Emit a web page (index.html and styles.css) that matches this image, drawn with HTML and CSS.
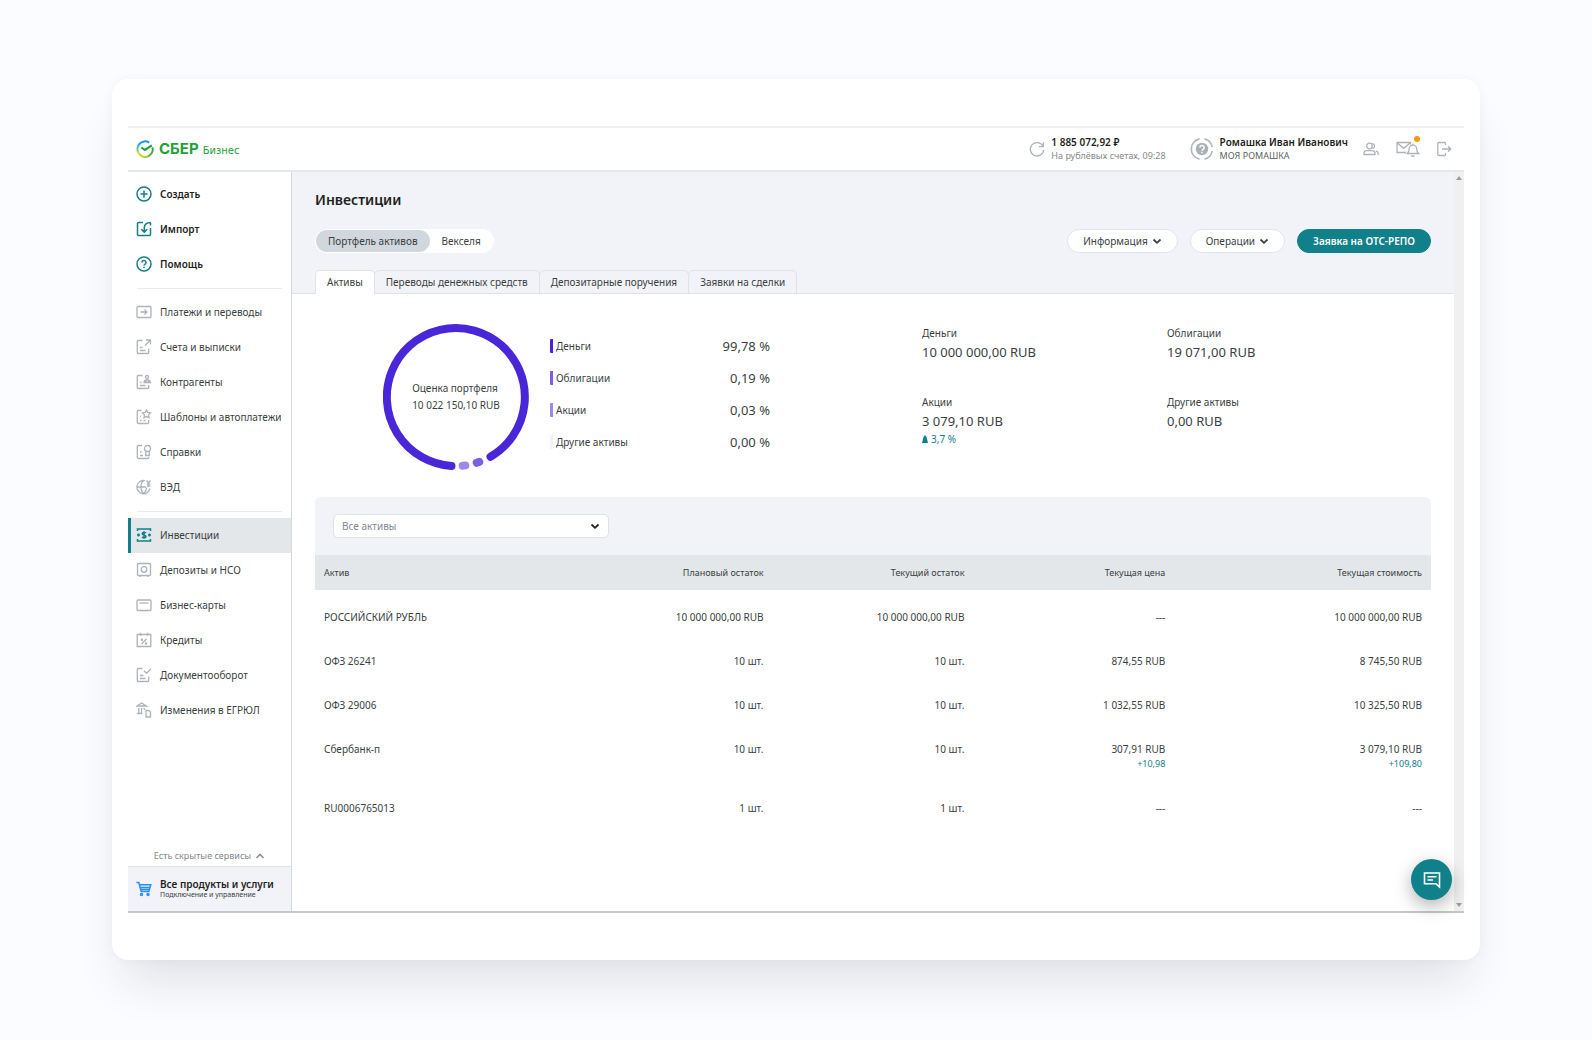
FILE: index.html
```html
<!DOCTYPE html>
<html lang="ru">
<head>
<meta charset="utf-8">
<meta name="viewport" content="width=device-width, initial-scale=1">
<title>СБЕР Бизнес — Инвестиции</title>
<link rel="stylesheet" href="styles.css">
</head>
<body>
<div class="card">
  <div class="app">
    <header class="header">
      <a class="logo" href="#">
        <svg class="logo-mark" viewBox="0 0 18 18" fill="none">
          <defs>
            <linearGradient id="left" x1="0" y1="0" x2="0" y2="1"><stop offset="0" stop-color="#1f9be0"/><stop offset=".45" stop-color="#4cc8a0"/><stop offset="1" stop-color="#f0e51a"/></linearGradient>
            <linearGradient id="right" x1="0" y1="1" x2="1" y2="0"><stop offset="0" stop-color="#e5e31c"/><stop offset=".5" stop-color="#52b43a"/><stop offset="1" stop-color="#21a038"/></linearGradient>
          </defs>
          <path d="M3.2 14.2A7.6 7.6 0 0 1 3.8 3.6" stroke="url(#left)" stroke-width="2"/>
          <path d="M3.4 3.9A7.6 7.6 0 0 1 13.2 2.6" stroke="#1f97e8" stroke-width="2"/>
          <path d="M3.2 14.2A7.6 7.6 0 0 0 16.4 7.4" stroke="url(#right)" stroke-width="2"/>
          <path d="M5.4 7.5l3.5 2.4 7-4.6" stroke="#21a038" stroke-width="2.1"/>
        </svg>
        <span class="logo-name">СБЕР</span>
        <span class="logo-sub">Бизнес</span>
      </a>
      <div class="balance">
        <svg class="icon grey" viewBox="0 0 16 16"><path d="M14 5.2A6.7 6.7 0 1 0 14.7 9M14.4 1.2v4.4H10"/></svg>
        <div class="two-line"><b>1 885 072,92 ₽</b><small class="muted">На рублёвых счетах, 09:28</small></div>
      </div>
      <div class="user">
        <svg class="avatar" viewBox="0 0 24 24"><g fill="none" stroke="#b3b9be" stroke-width="1.6"><path d="M14.5 1.9a10.3 10.3 0 0 1 7.7 8.3M22.2 13.8a10.3 10.3 0 0 1-7.7 8.3M9.5 22.1a10.3 10.3 0 0 1 0-20.2"/></g><circle cx="12" cy="12" r="6.2" fill="#a9b1b7"/><path d="M9.9 10.600a2.100 2.100 0 1 1 3.200 1.700c-.8.500-1.100.8-1.100 1.400M12 14.800v1.400" fill="none" stroke="#fff" stroke-width="1.500"/></svg>
        <div class="two-line"><b>Ромашка Иван Иванович</b><small>МОЯ РОМАШКА</small></div>
      </div>
      <button class="icon-button people" aria-label="Пользователи"><svg class="icon grey" viewBox="0 0 16 16"><circle cx="6.500" cy="5" r="2.800"/><path d="M1 13.500v-1.300c0-1.700 1.300-2.500 2.800-2.500h5.400c1.500 0 2.800.8 2.800 2.500v1.300zM9.500 2.300a2.800 2.800 0 0 1 0 5.400M13 9.800c1.500.5 2.200 1.300 2.200 2.700v1.500"/></svg></button>
      <button class="icon-button mail" aria-label="Уведомления"><svg class="icon wide grey" viewBox="0 0 24 16"><path d="M10 11.500H1v-10h13.500v2M1 1.800l6.700 5.500 6.600-5.500M11.200 12.500h11.300c-1.500-1.300-1.800-2.500-1.800-4.500a3.800 3.800 0 0 0-7.600 0c0 2-.4 3.200-1.900 4.500zM15.300 14.500c.9 1 2.300 1 3.200 0M16.900 4V2.800"/></svg><i class="dot"></i></button>
      <button class="icon-button" aria-label="Выйти"><svg class="icon grey" viewBox="0 0 16 16"><path d="M9.500 4V2.500a1 1 0 0 0-1-1H2.800a1 1 0 0 0-1 1v11a1 1 0 0 0 1 1h5.700a1 1 0 0 0 1-1V12M6 8h8.800M12 5.200L14.800 8 12 10.800"/></svg></button>
    </header>

    <div class="body">
      <aside class="sidebar">
        <nav class="nav">
          <a class="nav-item strong" href="#"><svg class="icon teal" viewBox="0 0 16 16"><circle cx="8" cy="8" r="7"/><path d="M8 4.500v7M4.500 8h7"/></svg>Создать</a>
          <a class="nav-item strong" href="#"><svg class="icon teal" viewBox="0 0 16 16"><path d="M7 1.500H2.500a1 1 0 0 0-1 1v11a1 1 0 0 0 1 1h11a1 1 0 0 0 1-1V7M14.800 1.500c-4 0-6.500 2-6.500 5.500v4.200M5.300 8.200l3 3 3-3M14.500 4.500V2"/></svg>Импорт</a>
          <a class="nav-item strong" href="#"><svg class="icon teal" viewBox="0 0 16 16"><circle cx="8" cy="8" r="7"/><path d="M6 6.500a2 2 0 1 1 3.100 1.600C8.400 8.500 8 8.800 8 9.600M8 10.800v1.300"/></svg>Помощь</a>
          <hr>
          <a class="nav-item" href="#"><svg class="icon grey" viewBox="0 0 16 16"><rect x="1" y="2.500" width="14" height="11" rx="1.200"/><path d="M4.500 8h6.500M8.500 5.500L11 8l-2.500 2.500"/></svg>Платежи и переводы</a>
          <a class="nav-item" href="#"><svg class="icon grey" viewBox="0 0 16 16"><path d="M6.500 1.500H2.300a1 1 0 0 0-1 1v11a1 1 0 0 0 1 1h9.400a1 1 0 0 0 1-1V9.500M4 8.500h2.500M4 11.500h5.500M9 6.500l5.300-5.300M10 1h4.500v4.500"/></svg>Счета и выписки</a>
          <a class="nav-item" href="#"><svg class="icon grey" viewBox="0 0 16 16"><path d="M6.500 1.500H2.300a1 1 0 0 0-1 1v11a1 1 0 0 0 1 1h9.400a1 1 0 0 0 1-1V11M4 8.500h1.500M4 11.500h5.500"/><circle cx="11" cy="3" r="1.500"/><path d="M8 8.500c0-2 1-2.500 3-2.500s3.300.5 3.300 2.500zM10 6.500v2M12.300 6.500v2"/></svg>Контрагенты</a>
          <a class="nav-item" href="#"><svg class="icon grey" viewBox="0 0 16 16"><path d="M5.500 1.500H2.300a1 1 0 0 0-1 1v11a1 1 0 0 0 1 1h9.400a1 1 0 0 0 1-1V11M4 7.500h1M4 11.500h1.500M7.500 11.500h2M10.500 1l1.200 2.500 2.900.4-2.100 2 .5 2.800-2.500-1.300L8 8.700l.5-2.800-2.100-2 2.900-.4z"/></svg>Шаблоны и автоплатежи</a>
          <a class="nav-item" href="#"><svg class="icon grey" viewBox="0 0 16 16"><path d="M6 1.500H2.300a1 1 0 0 0-1 1v11a1 1 0 0 0 1 1h9.400a1 1 0 0 0 1-1V13M4 8h1.500M4 11.500h3"/><circle cx="11.500" cy="4.500" r="3"/><path d="M9.800 7v4.500h3.500V7"/></svg>Справки</a>
          <a class="nav-item" href="#"><svg class="icon grey" viewBox="0 0 16 16"><path d="M9 1.700A6.600 6.600 0 1 0 14 9.500M7.500 1.500c-3.500 3.500-3.500 9.500 0 13.200M1 8h9M7.800 14.700c2-2 2.800-4 2.800-6.200M10.500 1.500l2 2.500 2-2.500M12.500 4v4M10.800 5h3.500M10.800 6.800h3.500"/></svg>ВЭД</a>
          <hr>
          <a class="nav-item active" href="#" aria-current="page"><svg class="icon teal" viewBox="0 0 16 16"><path d="M1.500 4V2h13v2M1.500 12v2h13v-2M1 8h3M2.500 6.500v3M12 8h3M13.500 6.500v3M10 6C9.500 5.200 6.200 5 6.200 6.700S10 7.800 10 9.400 6.800 11 6 10M8 4.200v7.600"/></svg>Инвестиции</a>
          <a class="nav-item" href="#"><svg class="icon grey" viewBox="0 0 16 16"><rect x="1.500" y="1.500" width="13" height="12" rx="1"/><circle cx="8" cy="7.500" r="2.800"/><path d="M4 13.500V15M12 13.500V15"/></svg>Депозиты и НСО</a>
          <a class="nav-item" href="#"><svg class="icon grey" viewBox="0 0 16 16"><rect x="1" y="3" width="14" height="10.500" rx="1"/><path d="M3.500 6h9"/></svg>Бизнес-карты</a>
          <a class="nav-item" href="#"><svg class="icon grey" viewBox="0 0 16 16"><path d="M1.200 2.500h13.600v12H1.200zM4.500.8v3M11.500.8v3M5.500 12l5-5"/><circle cx="6" cy="7.800" r=".6"/><circle cx="10" cy="11.500" r=".6"/></svg>Кредиты</a>
          <a class="nav-item" href="#"><svg class="icon grey" viewBox="0 0 16 16"><path d="M6.500 1.500H2.300a1 1 0 0 0-1 1v11a1 1 0 0 0 1 1h9.400a1 1 0 0 0 1-1V9.500M4 8.500h3.500M4 11.500h5.500M8 3.800l2.500 2.500L15 1.800"/></svg>Документооборот</a>
          <a class="nav-item" href="#"><svg class="icon grey" viewBox="0 0 16 16"><path d="M1 4l4.500-3L10.500 4zM2.800 6v5M5.500 6v5M8.200 6v2M.8 11.500h5.500M10 8.500h2.800l1.700 1.700v4.800H10z"/></svg>Изменения в ЕГРЮЛ</a>
        </nav>
        <button class="hidden-services">Есть скрытые сервисы <svg class="chevron" viewBox="0 0 10 10"><path d="M1.500 7L5 3.300 8.500 7"/></svg></button>
        <a class="products" href="#">
          <svg class="icon blue" viewBox="0 0 16 16"><path d="M.5 1.500h2.300l2.400 9h7.600l2-6.800H3.500M4.300 6.500h9.800M5 8.500h8.400"/><circle cx="5.500" cy="13.500" r="1"/><circle cx="12" cy="13.500" r="1"/></svg>
          <div class="two-line"><b>Все продукты и услуги</b><small>Подключение и управление</small></div>
        </a>
      </aside>

      <main class="main">
        <div class="page">
          <section class="top">
            <h1>Инвестиции</h1>
            <div class="toolbar">
              <div class="segments">
                <button class="segment selected">Портфель активов</button>
                <button class="segment">Векселя</button>
              </div>
              <div class="actions">
                <button class="pill">Информация <svg class="chevron" viewBox="0 0 10 10"><path d="M1.500 3.500L5 6.800l3.500-3.300"/></svg></button>
                <button class="pill">Операции <svg class="chevron" viewBox="0 0 10 10"><path d="M1.500 3.500L5 6.800l3.500-3.300"/></svg></button>
                <button class="pill primary">Заявка на ОТС-РЕПО</button>
              </div>
            </div>
            <div class="tabs" role="tablist">
              <button class="tab selected" role="tab" aria-selected="true">Активы</button>
              <button class="tab" role="tab">Переводы денежных средств</button>
              <button class="tab" role="tab">Депозитарные поручения</button>
              <button class="tab" role="tab">Заявки на сделки</button>
            </div>
          </section>

          <section class="summary">
            <div class="donut">
              <svg viewBox="0 0 146 146" fill="none" stroke-width="8" stroke-linecap="round">
                <path d="M107.500 132.700A69 69 0 1 0 68.500 141.900" stroke="#4a26d9"/>
                <path d="M93.700 138.800l2.600-.9" stroke="#7b61e0"/>
                <path d="M79.700 141.700l2.600-.3" stroke="#9d8ae8"/>
              </svg>
              <div class="donut-label"><span>Оценка портфеля</span><span>10 022 150,10 RUB</span></div>
            </div>
            <dl class="legend">
              <div><dt class="money">Деньги</dt><dd>99,78 %</dd></div>
              <div><dt class="bonds">Облигации</dt><dd>0,19 %</dd></div>
              <div><dt class="shares">Акции</dt><dd>0,03 %</dd></div>
              <div><dt class="other">Другие активы</dt><dd>0,00 %</dd></div>
            </dl>
            <dl class="totals">
              <div><dt>Деньги</dt><dd>10 000 000,00 RUB</dd></div>
              <div><dt>Облигации</dt><dd>19 071,00 RUB</dd></div>
              <div><dt>Акции</dt><dd>3 079,10 RUB</dd><dd class="change"><svg viewBox="0 0 6 8"><path d="M0 8L1.500 2 3 0l1.500 2L6 8z"/></svg>3,7 %</dd></div>
              <div><dt>Другие активы</dt><dd>0,00 RUB</dd></div>
            </dl>
          </section>

          <section class="assets">
            <div class="filter">
              <div class="select">
                <select aria-label="Фильтр активов"><option>Все активы</option></select>
                <svg class="chevron" viewBox="0 0 10 10"><path d="M1.500 3.500L5 6.800l3.500-3.300"/></svg>
              </div>
            </div>
            <table>
              <thead><tr><th>Актив</th><th>Плановый остаток</th><th>Текущий остаток</th><th>Текущая цена</th><th>Текущая стоимость</th></tr></thead>
              <tbody>
                <tr><td>РОССИЙСКИЙ РУБЛЬ</td><td>10 000 000,00 RUB</td><td>10 000 000,00 RUB</td><td>---</td><td>10 000 000,00 RUB</td></tr>
                <tr><td>ОФЗ 26241</td><td>10 шт.</td><td>10 шт.</td><td>874,55 RUB</td><td>8 745,50 RUB</td></tr>
                <tr><td>ОФЗ 29006</td><td>10 шт.</td><td>10 шт.</td><td>1 032,55 RUB</td><td>10 325,50 RUB</td></tr>
                <tr><td>Сбербанк-п</td><td>10 шт.</td><td>10 шт.</td><td>307,91 RUB<small>+10,98</small></td><td>3 079,10 RUB<small>+109,80</small></td></tr>
                <tr><td>RU0006765013</td><td>1 шт.</td><td>1 шт.</td><td>---</td><td>---</td></tr>
              </tbody>
            </table>
          </section>
        </div>
        <div class="scrollbar" aria-hidden="true">
          <svg viewBox="0 0 6 4"><path d="M0 4l3-4 3 4z"/></svg>
          <svg viewBox="0 0 6 4"><path d="M0 0l3 4 3-4z"/></svg>
        </div>
        <button class="chat" aria-label="Чат"><svg viewBox="0 0 18 18"><path d="M1.500 2h15v14l-3.500-3.200H1.500zM4.500 5.800h9M4.500 9h5.500"/></svg></button>
      </main>
    </div>
  </div>
</div>
</body>
</html>
```
FILE: styles.css
```css
* { box-sizing: border-box; }

body {
  margin: 0;
  min-height: 100vh;
  padding: 79px 112px 80px;
  background: #fbfcff;
  color: #3a3f42;
  font: 10px/14px "Noto Sans", "Liberation Sans", sans-serif;
}

h1, dl, dd, hr { margin: 0; }
button, select { font: inherit; color: inherit; border: 0; background: none; padding: 0; }
button { cursor: pointer; }
a { color: inherit; text-decoration: none; }
small { font-size: 9px; }
b { font-weight: 600; color: #1f1f22; }

.card {
  display: flex;
  min-height: calc(100vh - 159px);
  padding: 47px 16px;
  border-radius: 16px;
  background: #fff;
  box-shadow: 0 32px 48px -12px rgba(31, 31, 50, 0.12), 0 0 12px rgba(31, 31, 50, 0.04);
}

.app {
  flex: 1;
  min-width: 0;
  display: flex;
  flex-direction: column;
  border-top: 2px solid #f1f1f2;
  border-bottom: 2px solid #c6c6c9;
}

.icon {
  flex: none;
  width: 16px;
  height: 16px;
  fill: none;
  stroke: currentColor;
  stroke-width: 1.3;
}
.icon.wide { width: 24px; }
.icon.grey { color: #adb3b9; }
.icon.teal { color: #10808a; stroke-width: 1.5; }
.icon.blue { color: #2a8ff5; stroke-width: 1.5; }

.chevron {
  width: 10px;
  height: 10px;
  fill: none;
  stroke: currentColor;
  stroke-width: 1.8;
}

.two-line { display: flex; flex-direction: column; }

/* Header */
.header {
  display: flex;
  align-items: center;
  height: 44px;
  padding: 0 12px 0 8px;
  border-bottom: 2px solid #e4e8eb;
}
.logo { display: flex; align-items: baseline; margin-right: auto; color: #21a038; }
.logo-mark { width: 18px; height: 18px; margin-right: 5px; align-self: center; }
.logo-name { font: 700 15px/20px Inter, "Noto Sans", sans-serif; margin-right: 4px; }
.logo-sub { font-size: 10px; font-family: "DejaVu Sans", sans-serif; }
.balance { display: flex; align-items: center; gap: 6px; margin-right: 24px; }
.muted { color: #85898d; }
.user { display: flex; align-items: center; gap: 6px; margin-right: 15px; }
.user small { color: #5c6165; }
.header .two-line { line-height: 13px; }
.avatar { width: 24px; height: 24px; }
.icon-button { display: flex; position: relative; }
.people { margin-right: 17px; }
.mail { margin-right: 16px; }
.dot {
  position: absolute;
  top: -5px;
  right: 0;
  width: 6px;
  height: 6px;
  border-radius: 50%;
  background: #ff9900;
}

/* Layout */
.body { flex: 1; display: flex; }
.sidebar {
  flex: none;
  width: 164px;
  display: flex;
  flex-direction: column;
  border-right: 1px solid #d5d9dd;
}
.nav { flex: 1; padding-top: 5px; }
.nav hr { height: 1px; margin: 6px 9px; border: 0; background: #e9ebed; }
.nav-item {
  display: flex;
  align-items: center;
  gap: 8px;
  height: 35px;
  padding: 0 0 2px 8px;
  white-space: nowrap;
}
.nav-item.strong { font-weight: 600; color: #1f1f22; }
.nav-item.active { padding-left: 5px; border-left: 3px solid #10808a; background: #e3e7ea; }
.hidden-services {
  display: flex;
  justify-content: center;
  align-items: center;
  gap: 4px;
  height: 20px;
  color: #85898d;
  font-size: 9px;
}
.hidden-services .chevron { stroke-width: 1.5; }
.products {
  display: flex;
  align-items: center;
  gap: 8px;
  height: 45px;
  padding-left: 8px;
  border-top: 1px solid #dfe3e6;
  background: #f2f3f8;
}
.products .two-line { line-height: 12px; }
.products small { font-size: 7px; line-height: 10px; }

.main { flex: 1; min-width: 0; display: flex; position: relative; }
.page { flex: 1; min-width: 0; }
.scrollbar {
  flex: none;
  width: 10px;
  display: flex;
  flex-direction: column;
  align-items: center;
  justify-content: space-between;
  padding: 4px 0;
  background: #f0f0f1;
}
.scrollbar svg { width: 6px; height: 4px; fill: #9a9da0; }

/* Page top */
.top { padding: 18px 23px 0; background: #f2f3f8; border-bottom: 1px solid #dfe3e6; }
h1 { font-size: 14px; line-height: 20px; font-weight: 600; color: #1f1f22; }
.toolbar { display: flex; justify-content: space-between; align-items: center; margin: 19px 0 17px; }
.segments { display: flex; height: 24px; padding: 1px; border-radius: 12px; background: #fff; }
.segment { padding: 0 12px; border-radius: 12px; }
.segment.selected { background: #d0d7dd; }
.actions { display: flex; gap: 12px; }
.pill {
  display: flex;
  align-items: center;
  gap: 4px;
  height: 24px;
  padding: 0 15px;
  border: 1px solid #e0e4e8;
  border-radius: 12px;
  background: #fff;
}
.pill.primary { border-color: #10808a; background: #10808a; color: #fff; font-weight: 600; }
.tabs { display: flex; margin-bottom: -1px; }
.tab {
  height: 24px;
  padding: 0 11px;
  margin-right: -1px;
  border: 1px solid #dfe3e6;
  border-radius: 5px 5px 0 0;
}
.tab.selected { background: #fff; border-bottom-color: #fff; }

/* Summary */
.summary {
  display: grid;
  grid-template-columns: 146px 220px 1fr;
  column-gap: 21px;
  padding: 30px 18px 27px 91px;
}
.donut { display: grid; place-items: center; height: 146px; }
.donut > * { grid-area: 1 / 1; }
.donut svg { width: 146px; height: 146px; }
.donut-label { display: flex; flex-direction: column; line-height: 17px; }
.legend { display: flex; flex-direction: column; padding-top: 6px; }
.legend div { display: flex; align-items: center; justify-content: space-between; height: 32px; }
.legend dt { padding-left: 3px; border-left: 3px solid #4a26d9; border-radius: 1px; }
.legend .bonds { border-color: #7b61e0; }
.legend .shares { border-color: #9d8ae8; }
.legend .other { border-color: #f2f3f8; }
.legend dd, .totals dd { font-size: 13px; }
.totals {
  display: grid;
  grid-template-columns: 245px 245px;
  grid-template-rows: 69px 1fr;
  padding: 2px 0 0 131px;
}
.totals dd { line-height: 24px; }
.totals .change { display: flex; align-items: center; gap: 3px; font-size: 10px; line-height: 12px; color: #10808a; }
.change svg { width: 6px; height: 8px; fill: currentColor; }

/* Assets */
.assets { margin: 0 23px; border-radius: 6px 6px 0 0; background: #f2f3f8; }
.filter { padding: 17px 18px; }
.select { display: flex; align-items: center; position: relative; width: 276px; }
.select select {
  width: 100%;
  height: 24px;
  padding: 0 8px;
  border: 1px solid #dfe3e6;
  border-radius: 5px;
  background: #fff;
  color: #85898d;
  appearance: none;
}
.select .chevron { position: absolute; right: 9px; color: #1f1f22; pointer-events: none; }
table { width: 100%; table-layout: fixed; border-collapse: collapse; background: #fff; }
th, td { padding: 0 9px; text-align: right; font-weight: 400; }
th:first-child, td:first-child { text-align: left; }
th { width: 18%; height: 35px; background: #e3e7ea; font-size: 9px; }
th:first-child, th:last-child { width: 23%; }
td { padding: 15px 9px; vertical-align: top; }
tbody tr:first-child td { padding-top: 20px; }
td small { display: block; line-height: 15px; color: #10808a; }

.chat {
  position: absolute;
  right: 12px;
  bottom: 11px;
  width: 41px;
  height: 41px;
  display: grid;
  place-items: center;
  border-radius: 50%;
  background: #10808a;
  box-shadow: 0 6px 18px rgba(0, 0, 0, 0.3);
}
.chat svg { width: 18px; height: 18px; fill: none; stroke: #fff; stroke-width: 1.6; }
```
